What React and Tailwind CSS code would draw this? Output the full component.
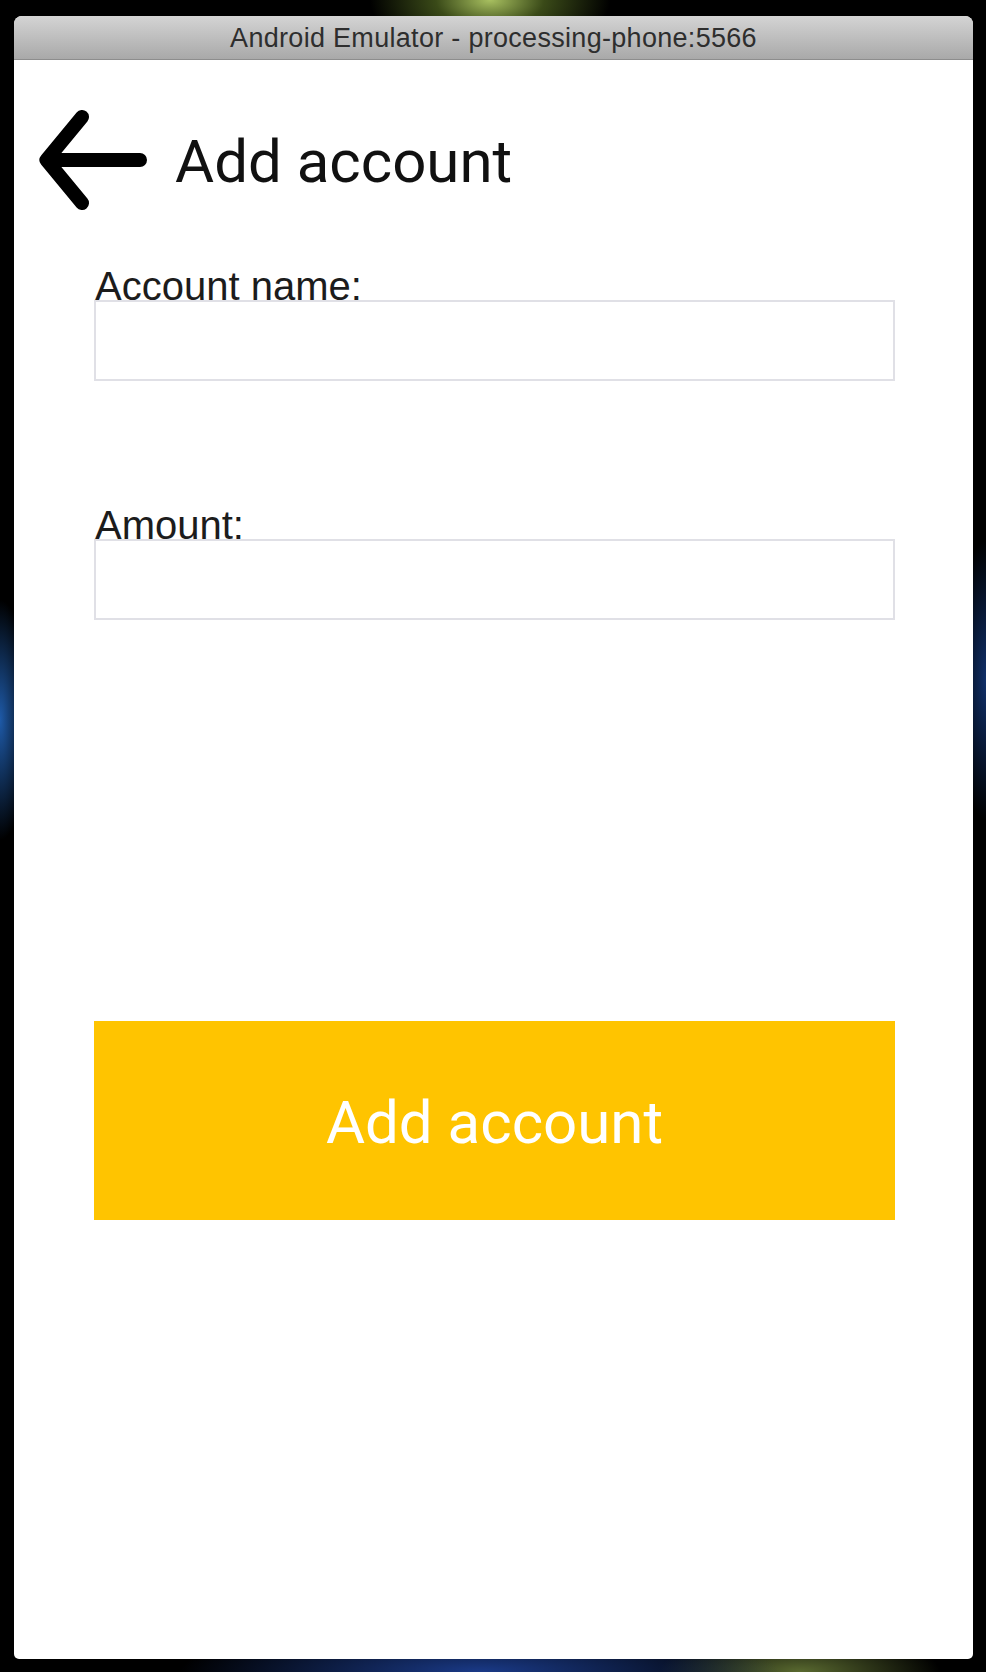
import React from 'react';

function BackArrow() {
    return (
        <svg width="108" height="100" viewBox="0 0 108 100" className="shrink-0">
            <path
                d="M101 50 H9 M43 7 L7.5 50 L43 93"
                fill="none"
                stroke="#000"
                strokeWidth="14"
                strokeLinecap="round"
                strokeLinejoin="round"
            />
        </svg>
    );
}

function Field({ label, gap }) {
    return (
        <div className={gap}>
            <div className="font-['Liberation_Sans',Arial,sans-serif] text-[40px] leading-[40px] -mb-[6px] pl-[1px] text-[#1c1c1c] relative z-10">
                {label}
            </div>
            <div className="h-[81px] border-2 border-[#e0e0e6] bg-white" />
        </div>
    );
}

export default function App() {
    return (
        <div className="w-[986px] h-[1672px] overflow-hidden bg-black bg-[radial-gradient(ellipse_120px_60px_at_490px_0px,#a8c060_0%,#3a4a18_45%,transparent_100%),radial-gradient(ellipse_300px_50px_at_480px_1672px,#1a3a88_0%,transparent_100%),radial-gradient(ellipse_30px_120px_at_0px_720px,#1e5aa8_0%,transparent_100%),radial-gradient(ellipse_30px_140px_at_986px_680px,#10306a_0%,transparent_100%),radial-gradient(ellipse_140px_40px_at_800px_1672px,#5a6a30_0%,transparent_100%)] pt-[16px] pl-[14px]">
            <div className="w-[959px] h-[1643px] bg-white rounded-t-[8px] rounded-b-[5px] overflow-hidden flex flex-col">

                {/* Title bar */}
                <div className="h-[44px] shrink-0 flex items-center justify-center bg-gradient-to-b from-[#d4d4d4] to-[#a9a9a9] border-b border-[#8d8d8d]">
                    <span className="font-['Liberation_Sans',Arial,sans-serif] text-[27px] tracking-[0.3px] text-[#2e2e2e] pt-[1px]">
                        Android Emulator - processing-phone:5566
                    </span>
                </div>

                {/* Screen */}
                <div className="flex-1 flex flex-col">
                    <div className="flex items-center pl-[25px] mt-[50px]">
                        <BackArrow />
                        <span className="ml-[28px] mt-[3px] font-['Roboto',sans-serif] text-[60px] leading-none text-[#111]">
                            Add account
                        </span>
                    </div>

                    <div className="px-[80px] pr-[78px] flex flex-col">
                        <Field label="Account name:" gap="mt-[56px]" />
                        <Field label="Amount:" gap="mt-[124px]" />

                        <button className="mt-[401px] h-[199px] w-full bg-[#ffc400] flex items-center justify-center">
                            <span className="font-['Roboto',sans-serif] text-[60px] leading-none text-white mt-[4px]">
                                Add account
                            </span>
                        </button>
                    </div>
                </div>
            </div>
        </div>
    );
}
